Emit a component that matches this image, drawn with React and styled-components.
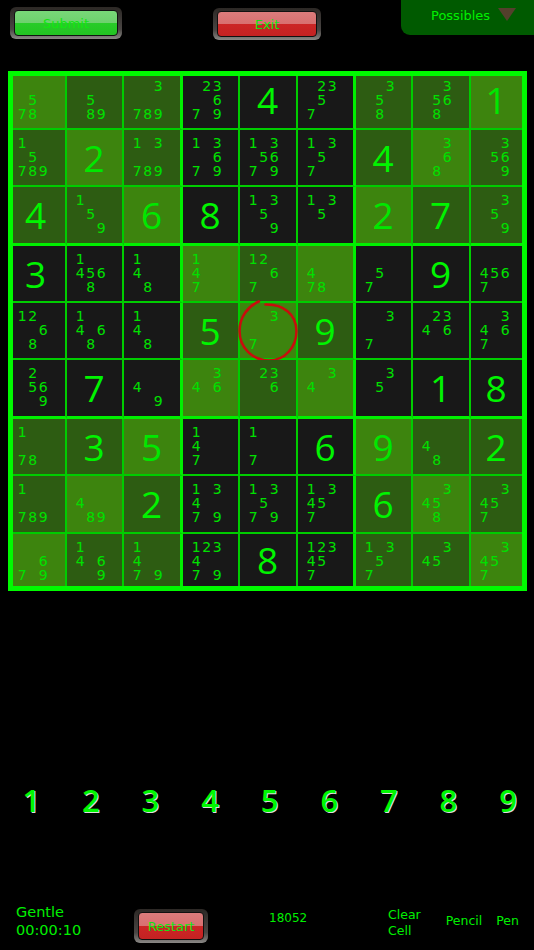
import React from 'react';
import styled, { createGlobalStyle } from 'styled-components';

const GlobalStyle = createGlobalStyle`
  html, body {
    margin: 0;
    padding: 0;
    background: #000;
  }
`;

const FONT = `"DejaVu Sans", "Liberation Sans", sans-serif`;
const GREEN = '#00f000';

const Page = styled.div`
  width: 534px;
  height: 950px;
  display: flex;
  flex-direction: column;
  background: #000;
  color: ${GREEN};
  font-family: ${FONT};
  overflow: hidden;
  & > * {
    flex: none;
  }
`;

const Header = styled.div`
  height: 71px;
  display: flex;
  align-items: flex-start;
`;

const Bezel = styled.div`
  box-sizing: border-box;
  width: ${({ $w }) => $w}px;
  height: ${({ $h }) => $h}px;
  margin-left: ${({ $left }) => $left}px;
  margin-top: ${({ $top }) => $top}px;
  padding: 3px 4px;
  border-radius: 6px;
  background: linear-gradient(#2c2825, #4a4644 70%, #8a8885);
  flex: none;
`;

const Gloss = styled.div`
  height: 100%;
  border-radius: 4px;
  border: 1px solid #111;
  box-sizing: border-box;
  display: flex;
  align-items: center;
  justify-content: center;
  font-size: 13px;
  color: #12e612;
  background: ${({ $tone }) =>
    $tone === 'green'
      ? 'linear-gradient(#78d878 0, #6ed06e 50%, #28cc28 50%, #22c422 100%)'
      : 'linear-gradient(#dc7c7c 0, #d87070 50%, #cc2626 50%, #c42222 100%)'};
`;

const PossiblesTab = styled.div`
  box-sizing: border-box;
  width: 133px;
  height: 35px;
  margin-left: auto;
  padding: 8px 18px 0 30px;
  display: flex;
  justify-content: space-between;
  background: #005a00;
  border-radius: 0 0 0 9px;
  font-size: 13px;
  line-height: 16px;
`;

const Board = styled.div`
  box-sizing: border-box;
  width: 519px;
  height: 520px;
  margin-left: 8px;
  border: 5px solid #00fa00;
  display: grid;
  grid-template-columns: 54px 57px 59px 57px 58px 58px 57px 58px 51px;
  grid-template-rows: 54px 57px 59px 57px 57px 59px 57px 58px 52px;
`;

const Cell = styled.div`
  box-sizing: border-box;
  position: relative;
  background: ${({ $bg }) => $bg};
  border-right: ${({ $col }) =>
    $col === 8 ? 'none' : $col % 3 === 2 ? '3px solid #00f000' : '2px solid #00cc00'};
  border-bottom: ${({ $row }) =>
    $row === 8 ? 'none' : $row % 3 === 2 ? '3px solid #00f000' : '2px solid #00cc00'};
`;

const Pencil = styled.div`
  display: grid;
  grid-template-columns: repeat(3, 10.5px);
  grid-template-rows: repeat(3, 14px);
  padding-left: ${({ $col }) => ($col === 0 ? 4 : 8)}px;
  padding-top: ${({ $row }) => ($row === 0 ? 3 : 6)}px;
  font-size: 14px;
  line-height: 14px;
  text-align: center;
  color: #00e000;
`;

const Big = styled.div`
  height: 100%;
  display: flex;
  align-items: center;
  justify-content: center;
  padding-right: ${({ $col }) => ($col === 0 ? 7 : 1)}px;
  padding-bottom: ${({ $row }) => ($row === 0 ? 5 : 1)}px;
  box-sizing: border-box;
  font-family: "Open Sans", ${FONT};
  font-size: 37px;
  font-weight: 500;
  color: ${({ $light }) => ($light ? '#00e800' : '#00f400')};
`;

const Ring = styled.svg`
  position: absolute;
  left: 0;
  top: 0;
  overflow: visible;
  pointer-events: none;
`;

const Pad = styled.div`
  margin-top: 188px;
  padding-left: 1.5px;
  display: grid;
  grid-template-columns: repeat(9, 59.6px);
  height: 36px;
`;

const PadKey = styled.div`
  display: flex;
  align-items: center;
  justify-content: center;
  font-family: "Open Sans", ${FONT};
  font-size: 31px;
  font-weight: 600;
  color: #00f800;
  text-shadow: 1px 1px 0 #ddd;
`;

const Footer = styled.div`
  margin-top: 86px;
  height: 49px;
  display: flex;
  align-items: flex-start;
`;

const Status = styled.div`
  width: 118px;
  margin: 2px 0 0 16px;
  font-size: 14.5px;
  line-height: 18px;
  flex: none;
`;

const PuzzleId = styled.div`
  margin: 9px 0 0 61px;
  font-size: 12px;
  line-height: 16px;
  width: 119px;
  flex: none;
`;

const Tool = styled.div`
  margin-top: ${({ $top }) => $top}px;
  margin-left: ${({ $left }) => $left}px;
  font-size: 12.5px;
  line-height: 16px;
  flex: none;
`;

// digits: "=4" is a placed number, anything else is a list of pencil marks
const rows = [
  ['578', '589', '3789', '23679', '=4', '2357', '358', '3568', '=1'],
  ['15789', '=2', '13789', '13679', '135679', '1357', '=4', '368', '3569'],
  ['=4', '159', '=6', '=8', '1359', '135', '=2', '=7', '359'],
  ['=3', '14568', '148', '147', '1267', '478', '57', '=9', '4567'],
  ['1268', '1468', '148', '=5', '37', '=9', '37', '2346', '3467'],
  ['2569', '=7', '49', '346', '236', '34', '35', '=1', '=8'],
  ['178', '=3', '=5', '147', '17', '=6', '=9', '48', '=2'],
  ['1789', '489', '=2', '13479', '13579', '13457', '=6', '3458', '3457'],
  ['679', '1469', '1479', '123479', '=8', '123457', '1357', '345', '3457'],
];

const cellColour = (r, c) => {
  const boxR = Math.floor(r / 3);
  const boxC = Math.floor(c / 3);
  if ((boxR + boxC) % 2 === 1) return '#181818';
  if (r === c || r + c === 8) return '#3d840e';
  return '#2d5c12';
};

const isLight = (r, c) => cellColour(r, c) === '#3d840e';

const App = () => {
  return (
    <Page>
      <GlobalStyle />
      <Header>
        <Bezel $w={112} $h={32} $left={10} $top={7}>
          <Gloss $tone="green">Submit</Gloss>
        </Bezel>
        <Bezel $w={108} $h={32} $left={91} $top={8}>
          <Gloss $tone="red">Exit</Gloss>
        </Bezel>
        <PossiblesTab>
          <span>Possibles</span>
          <svg width="18" height="14" viewBox="0 0 18 14">
            <polygon points="0,0 18,0 9,13" fill="#54402c" />
          </svg>
        </PossiblesTab>
      </Header>

      <Board>
        {rows.map((row, r) =>
          row.map((val, c) => (
            <Cell key={`${r}-${c}`} $row={r} $col={c} $bg={cellColour(r, c)}>
              {val[0] === '=' ? (
                <Big $row={r} $col={c} $light={isLight(r, c)}>{val[1]}</Big>
              ) : (
                <Pencil $row={r} $col={c}>
                  {[1, 2, 3, 4, 5, 6, 7, 8, 9].map((n) => (
                    <span key={n}>{val.includes(String(n)) ? n : ''}</span>
                  ))}
                </Pencil>
              )}
              {r === 4 && c === 4 && (
                <Ring width="58" height="58" viewBox="0 0 58 58">
                  <path
                    d="M19 -1.5 C8 3 -0.5 14 -0.5 28 C-0.5 45 13 57.5 29 57.5 C45 57.5 56.5 44 56.5 28 C56.5 11 43 1 25.5 1.5"
                    fill="none"
                    stroke="#c80d0d"
                    strokeWidth="2.6"
                    strokeLinecap="round"
                  />
                </Ring>
              )}
            </Cell>
          ))
        )}
      </Board>

      <Pad>
        {[1, 2, 3, 4, 5, 6, 7, 8, 9].map((n) => (
          <PadKey key={n}>{n}</PadKey>
        ))}
      </Pad>

      <Footer>
        <Status>
          <div>Gentle</div>
          <div>00:00:10</div>
        </Status>
        <Bezel $w={74} $h={34} $left={0} $top={8}>
          <Gloss $tone="red">Restart</Gloss>
        </Bezel>
        <PuzzleId>18052</PuzzleId>
        <Tool $top={6} $left={0}>
          Clear
          <br />
          Cell
        </Tool>
        <Tool $top={12} $left={25}>Pencil</Tool>
        <Tool $top={12} $left={14}>Pen</Tool>
      </Footer>
    </Page>
  );
};

export default App;
